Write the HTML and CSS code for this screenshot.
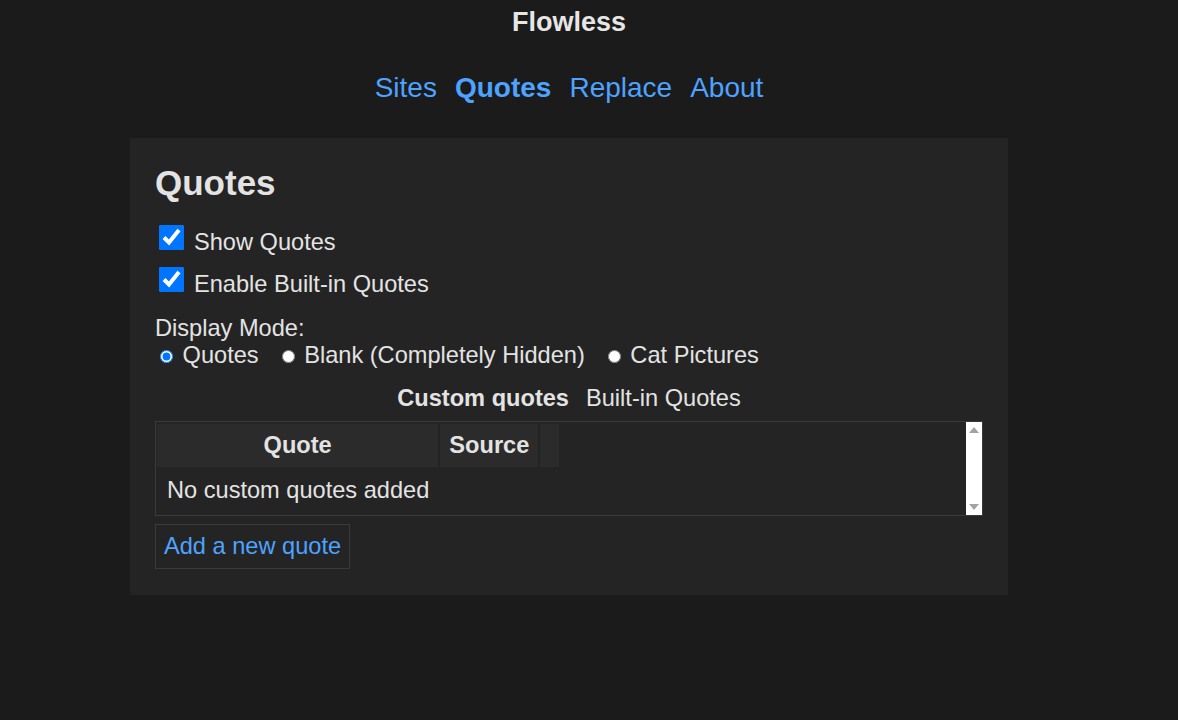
FILE: index.html
```html
<!DOCTYPE html>
<html lang="en">
<head>
<meta charset="utf-8">
<title>Flowless</title>
<link rel="stylesheet" href="styles.css">
</head>
<body>
<div class="page">
  <header class="top">
    <h1 class="brand">Flowless</h1>
    <nav class="nav">
      <a class="nav-link" href="#">Sites</a>
      <a class="nav-link active" href="#">Quotes</a>
      <a class="nav-link" href="#">Replace</a>
      <a class="nav-link" href="#">About</a>
    </nav>
  </header>
  <main class="panel">
    <h2 class="panel-title">Quotes</h2>
    <label class="check-row"><input class="check" type="checkbox" checked><span>Show Quotes</span></label>
    <label class="check-row"><input class="check" type="checkbox" checked><span>Enable Built-in Quotes</span></label>
    <div class="mode-label">Display Mode:</div>
    <div class="modes"><label class="mode"><input class="radio" type="radio" name="mode" checked> Quotes</label><label class="mode"><input class="radio" type="radio" name="mode"> Blank (Completely Hidden)</label><label class="mode"><input class="radio" type="radio" name="mode"> Cat Pictures</label></div>
    <div class="tabs">
      <button class="tab active" type="button">Custom quotes</button>
      <button class="tab" type="button">Built-in Quotes</button>
    </div>
    <div class="table-wrap">
      <table class="quotes-table">
        <thead>
          <tr><th class="th-quote">Quote</th><th>Source</th><th class="th-empty"></th></tr>
        </thead>
        <tbody>
          <tr><td class="empty-msg">No custom quotes added</td><td></td><td></td></tr>
        </tbody>
      </table>
      <div class="scrollbar" aria-hidden="true">
        <svg class="sb-arrow" width="16" height="16" viewBox="0 0 16 16"><path d="M3 11 L8 5 L13 11 Z" fill="#a3a3a3"/></svg>
        <svg class="sb-arrow" width="16" height="16" viewBox="0 0 16 16"><path d="M3 5 L8 11 L13 5 Z" fill="#a3a3a3"/></svg>
      </div>
    </div>
    <button class="add-btn" type="button">Add a new quote</button>
  </main>
</div>
</body>
</html>
```

FILE: styles.css
```css
html, body {
  margin: 0;
  padding: 0;
  background: #1b1b1b;
}

body {
  font-family: "Liberation Sans", Arial, sans-serif;
  color: #e3e3e3;
  height: 720px;
  overflow: hidden;
}

.page {
  width: 1138px;
  padding-top: 6px;
}

.top {
  display: flex;
  flex-direction: column;
  align-items: center;
}

.brand {
  margin: 0;
  font-size: 27px;
  line-height: 32px;
  font-weight: bold;
  color: #e6e6e6;
}

.nav {
  display: flex;
  gap: 18px;
  margin-top: 34px;
}

.nav-link {
  font-size: 28px;
  line-height: 32px;
  color: #4da3ff;
  text-decoration: none;
}

.nav-link.active {
  font-weight: bold;
}

.panel {
  display: block;
  box-sizing: border-box;
  width: 878px;
  margin: 34px auto 0;
  padding: 25px 25px 26px;
  background: #242424;
  font-size: 23.6px;
}

.panel-title {
  margin: 0 0 18px;
  font-size: 35px;
  line-height: 40px;
  font-weight: bold;
  color: #e3e3e3;
}

.check-row {
  display: flex;
  align-items: flex-start;
  height: 42px;
  line-height: 42px;
}

.check {
  width: 25px;
  height: 25px;
  margin: 4px 10px 0 4px;
}

.mode-label {
  margin-top: 10px;
  line-height: 27px;
}

.modes {
  display: flex;
  align-items: baseline;
  gap: 18px;
  line-height: 27px;
}

.radio {
  margin: 3px 3px 0 5px;
}

.tabs {
  display: flex;
  justify-content: center;
  gap: 17px;
  margin: 16px 0 9px;
}

.tab {
  padding: 0;
  border: 0;
  background: none;
  font-family: inherit;
  font-size: 23.6px;
  line-height: 27px;
  color: #e3e3e3;
  font-weight: normal;
}

.tab.active {
  font-weight: bold;
}

.table-wrap {
  position: relative;
  box-sizing: border-box;
  height: 95px;
  border: 1px solid #3a3a3a;
  overflow: hidden;
}

.quotes-table {
  border-spacing: 2px;
  margin-left: -1px;
  line-height: 27px;
}

.quotes-table th {
  padding: 8px 9px;
  background: #2b2b2b;
  font-weight: bold;
  color: #e3e3e3;
}

.quotes-table th.th-empty {
  padding: 8px;
}

.quotes-table td {
  padding: 8px 9px 8px 10px;
}

.scrollbar {
  position: absolute;
  top: 0;
  right: 0;
  bottom: 0;
  width: 16px;
  background: #ffffff;
  display: flex;
  flex-direction: column;
  justify-content: space-between;
}

.sb-arrow {
  display: block;
}

.add-btn {
  margin-top: 8px;
  padding: 8px;
  border: 1px solid #3a3a3a;
  background: #242424;
  font-family: inherit;
  font-size: 23.6px;
  line-height: 27px;
  color: #4da3ff;
}
```
